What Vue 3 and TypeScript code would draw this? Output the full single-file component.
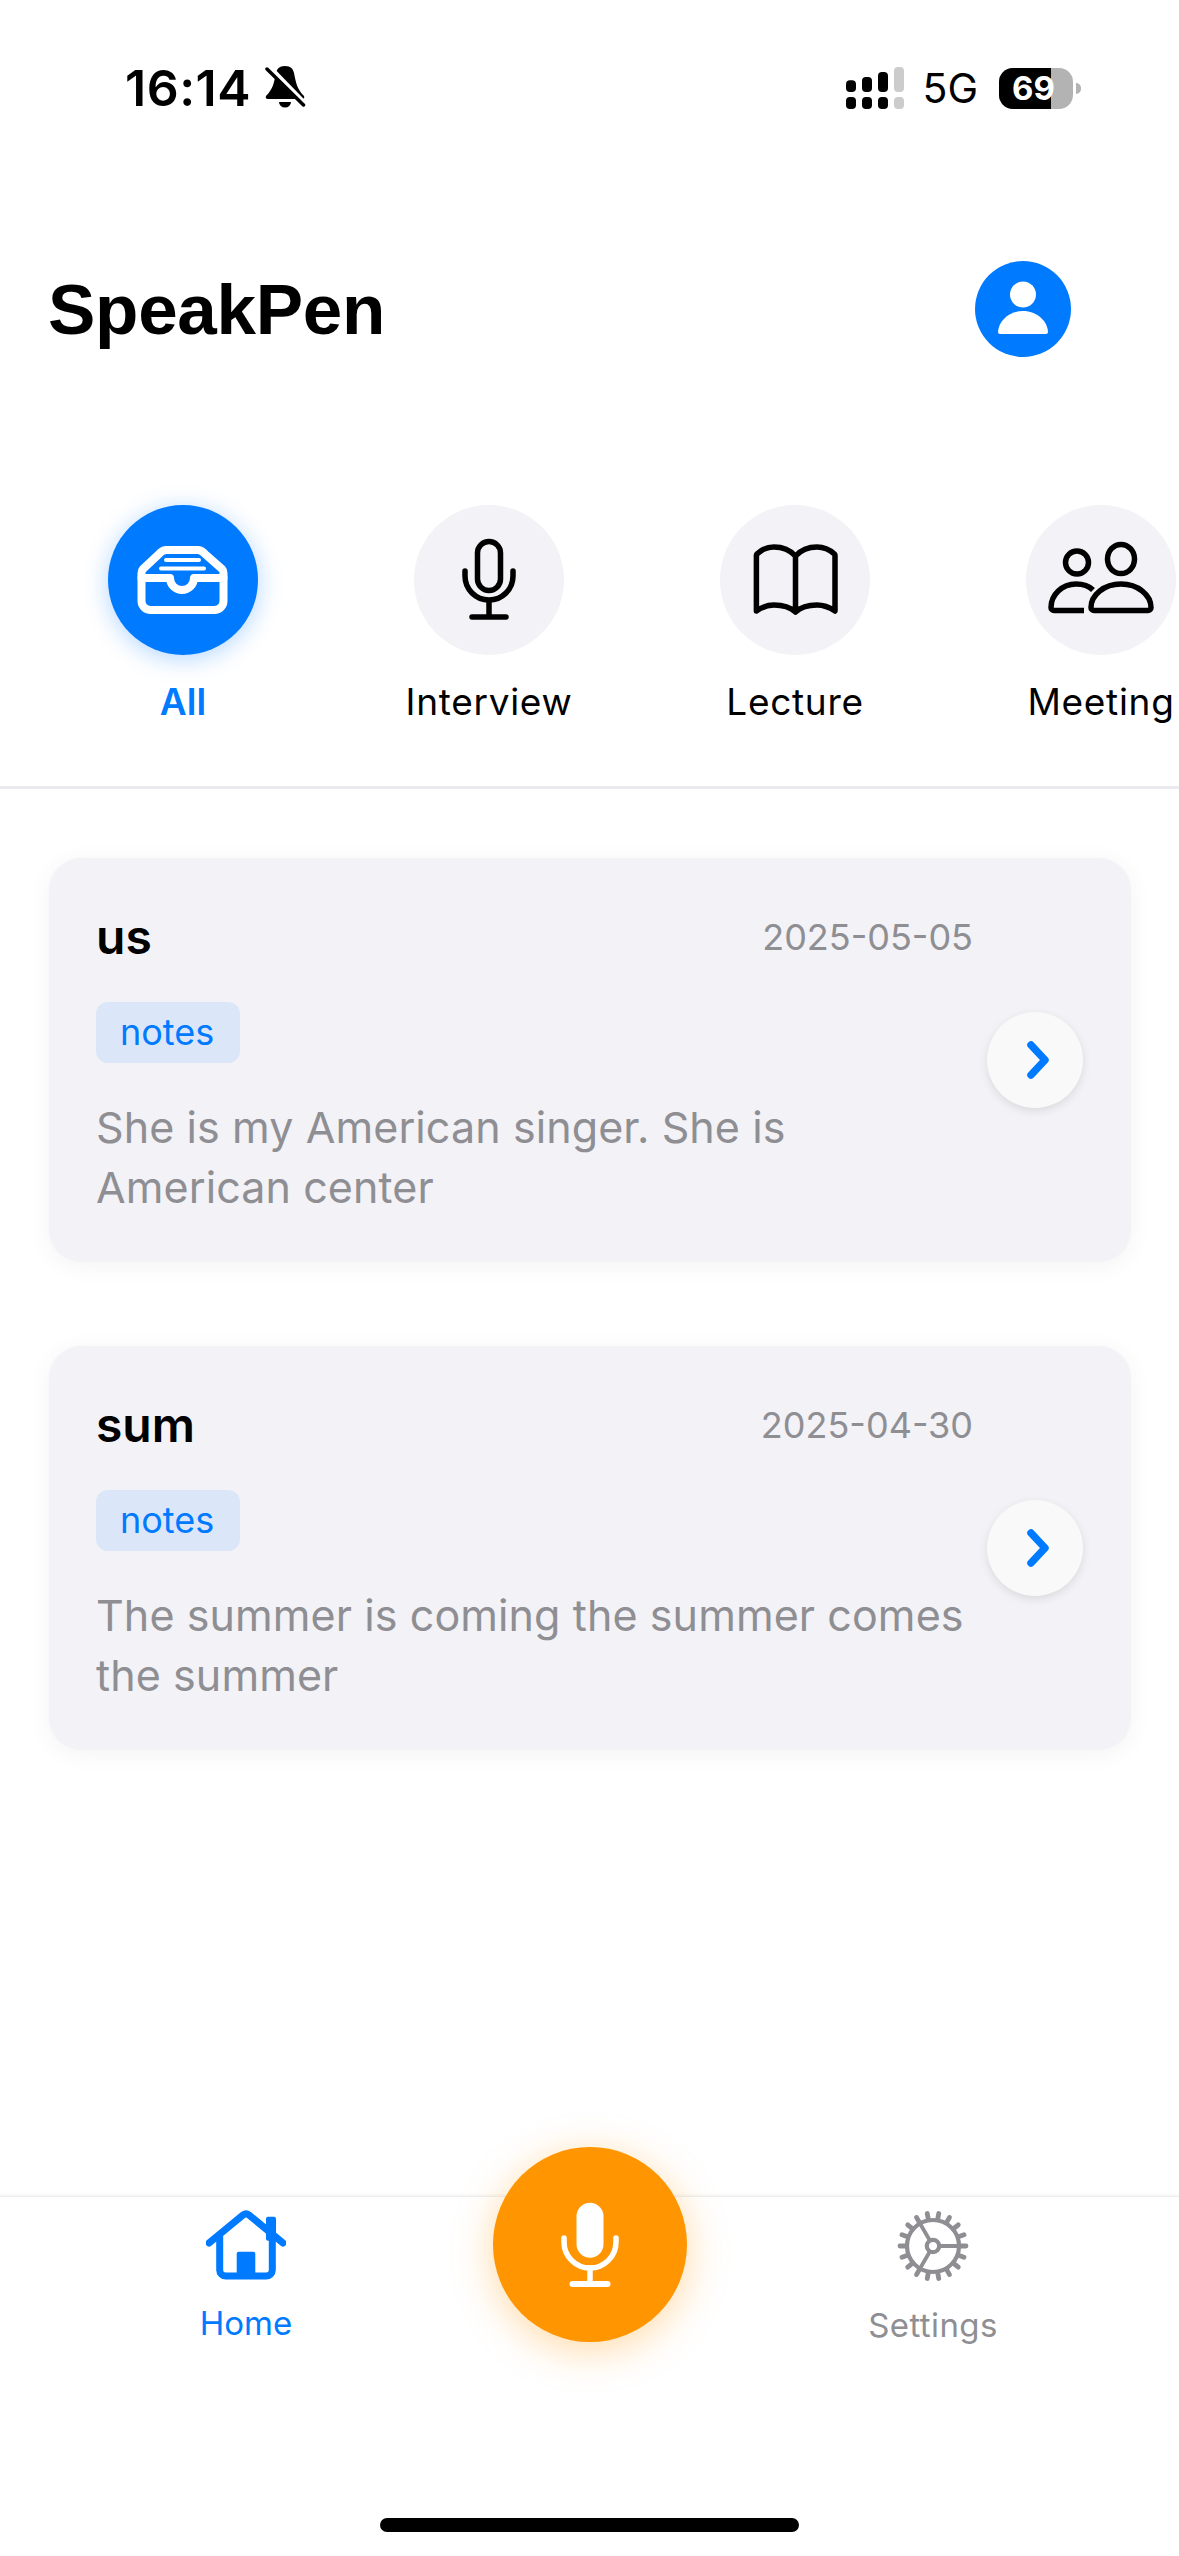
<template>
  <div class="page">
    <div class="status">
      <span class="time">16:14</span>
      <svg class="bell" width="42" height="44" viewBox="0 0 42 44">
        <path d="M20 0C14 0 12 3 11 7C9 17 8 23 1 30Q0 33 3 33H37Q40 33 39 30C32 23 31 17 29 7C28 3 26 0 20 0Z" fill="#000" />
        <path d="M14 36a6 5.500 0 0 0 12 0Z" fill="#000" />
        <path d="M5 1L41 38" stroke="#fff" stroke-width="4" />
        <path d="M2 3L38.500 39" stroke="#000" stroke-width="3.500" stroke-linecap="round" />
      </svg>
      <div class="status-right">
        <svg width="58" height="42" viewBox="0 0 58 42">
          <rect v-for="b in signalBars" :key="b.x" :x="b.x" :y="b.y" width="10" :height="25 - b.y" rx="4" :fill="b.x === 48 ? '#ccc' : '#000'" />
          <rect v-for="b in signalBars" :key="b.x" :x="b.x" y="30" width="10" height="12" rx="4" :fill="b.x === 48 ? '#ccc' : '#000'" />
        </svg>
        <span class="net">5G</span>
        <div class="battery">
          <div class="battery-fill"></div>
          <span class="battery-num">69</span>
        </div>
        <div class="battery-nub"></div>
      </div>
    </div>

    <header class="header">
      <h1 class="title">SpeakPen</h1>
      <div class="avatar">
        <svg width="96" height="96" viewBox="0 0 96 96" fill="#fff">
          <circle cx="48" cy="33.500" r="13" />
          <path d="M25 73a2 2 0 0 1-2-2C23.500 60 34 50 48 50C62 50 72.500 60 73 71a2 2 0 0 1-2 2Z" />
        </svg>
      </div>
    </header>

    <div class="tabs">
      <div v-for="tab in tabs" :key="tab.id" class="tab" :class="{ active: tab.id === 'all' }">
        <div class="tab-circle">
          <svg width="150" height="150" viewBox="0 0 150 150" fill="none" stroke-linecap="round" stroke-linejoin="round">
            <g v-if="tab.id === 'all'" stroke="#fff">
              <path stroke-width="8" d="M33.500 68V96a9 9 0 0 0 9 9H106.500a9 9 0 0 0 9-9V68a6 6 0 0 0-1.500-4L97 49a10 10 0 0 0-7-4H58a10 10 0 0 0-7 4L35 64a6 6 0 0 0-1.500 4Z" />
              <path stroke-width="8" d="M33.500 73H62a12 12 0 0 0 24 0H115.500" />
              <path stroke-width="4" d="M58 55H91M53 63.500H96" />
            </g>
            <g v-else-if="tab.id === 'interview'" stroke="#000" stroke-width="5.500">
              <rect x="63.500" y="36.500" width="23" height="49" rx="11.500" />
              <path d="M51 66V71a24 24 0 0 0 48 0V66M75 95V112M58 112H92" />
            </g>
            <g v-else-if="tab.id === 'lecture'" stroke="#000" stroke-width="5.500">
              <path d="M75.500 51C70 45 62 42 54 42C47 42 41 45 37 49a2 2 0 0 0-.6 1.500V106C42 102 48 100 54 100C62 100 70 102 75.500 107C81 102 89 100 97 100C103 100 109 102 115 106V50.500a2 2 0 0 0-.6-1.500C110 45 104 42 97 42C89 42 81 45 75.500 51ZM75.500 51V107" />
            </g>
            <g v-else stroke="#000" stroke-width="5.500">
              <ellipse cx="95" cy="54" rx="13.500" ry="14.500" />
              <circle cx="51" cy="57.500" r="11.500" />
              <path d="M68 105.500H122a3 3 0 0 0 3-3C125 90 112 79 95 79C78 79 65 90 65 102.500a3 3 0 0 0 3 3Z" />
              <path d="M58 105.500H28a3 3 0 0 1-3-3C25 90 36 79 50 79C57 79 63 81 67 85" stroke-linecap="butt" />
            </g>
          </svg>
        </div>
        <span class="tab-label">{{ tab.label }}</span>
      </div>
    </div>

    <div class="list">
      <div v-for="note in notes" :key="note.title" class="card">
        <div class="card-body">
          <div class="card-top">
            <span class="card-title">{{ note.title }}</span>
            <span class="card-date">{{ note.date }}</span>
          </div>
          <span class="tag">notes</span>
          <p class="card-text">{{ note.text }}</p>
        </div>
        <div class="card-arrow">
          <svg width="30" height="44" viewBox="0 0 30 44" fill="none">
            <path d="M8 7L22 22L8 37" stroke="#007aff" stroke-width="7.500" stroke-linecap="round" stroke-linejoin="round" />
          </svg>
        </div>
      </div>
    </div>

    <nav class="nav">
      <div class="nav-items">
        <div class="nav-item home">
          <svg width="80" height="70" viewBox="0 0 80 70" fill="none" stroke="#007aff" stroke-linecap="round" stroke-linejoin="round">
            <path stroke-width="7" d="M3 33L37 5a5 5 0 0 1 6 0L77 33" />
            <path stroke-width="7" d="M13.700 27V60a6 6 0 0 0 6 6H60.300a6 6 0 0 0 6-6V27" />
            <rect x="60" y="6.700" width="10" height="24" rx="2" fill="#007aff" stroke="none" />
            <rect x="30.700" y="41.700" width="18.600" height="25" rx="2" fill="#007aff" stroke="none" />
          </svg>
          <span>Home</span>
        </div>
        <div class="nav-item">
          <svg width="72" height="72" viewBox="-36 -36 72 72" fill="none" stroke="#8e8e93" stroke-linecap="round">
            <circle r="26" stroke-width="4.200" />
            <path v-for="t in gearTeeth" :key="t" :d="t" stroke-width="4.800" />
            <circle r="6.200" stroke-width="4.200" />
            <path stroke-width="3.800" d="M8 0H26M-4 -7L-13 -22.500M-4 7L-13 22.500" />
          </svg>
          <span>Settings</span>
        </div>
      </div>
      <button class="record">
        <svg width="194" height="195" viewBox="0 0 194 195" fill="none" stroke="#fff" stroke-linecap="round">
          <rect x="83.500" y="55.700" width="27" height="55" rx="13.500" fill="#fff" stroke="none" />
          <path stroke-width="5.500" d="M71 91V95a26 26 0 0 0 52 0V91" />
          <path stroke-width="5.500" d="M97 121V137" />
          <path stroke-width="6" d="M79.500 137H114.500" />
        </svg>
      </button>
      <div class="home-bar"></div>
    </nav>
  </div>
</template>

<script setup lang="ts">
const signalBars = [
  { x: 0, y: 13.3 },
  { x: 16, y: 10 },
  { x: 32, y: 5 },
  { x: 48, y: 0 }
];

const tabs = [
  { id: 'all', label: 'All' },
  { id: 'interview', label: 'Interview' },
  { id: 'lecture', label: 'Lecture' },
  { id: 'meeting', label: 'Meeting' }
];

const notes = [
  { title: 'us', date: '2025-05-05', text: 'She is my American singer. She is American center' },
  { title: 'sum', date: '2025-04-30', text: 'The summer is coming the summer comes the summer' }
];

// 18 short ticks round the ring of the settings gear
const gearTeeth = Array.from({ length: 18 }, (_, i) => {
  const a = (i * 20 * Math.PI) / 180;
  const c = Math.cos(a);
  const s = Math.sin(a);
  return `M${(27 * c).toFixed(2)} ${(27 * s).toFixed(2)}L${(33 * c).toFixed(2)} ${(33 * s).toFixed(2)}`;
});
</script>

<style scoped>
.page {
  height: 2556px;
  display: flex;
  flex-direction: column;
  overflow: hidden;
  background: #fff;
  font-family: Inter, "Liberation Sans", sans-serif;
  color: #000;
}

.status {
  height: 176px;
  flex-shrink: 0;
  display: flex;
  align-items: center;
  padding-left: 125px;
}

.time {
  font-size: 50px;
  font-weight: 600;
  letter-spacing: 0.5px;
  line-height: 1;
}

.bell {
  margin-left: 14px;
}

.status-right {
  margin-left: auto;
  margin-right: 98px;
  display: flex;
  align-items: center;
}

.net {
  margin-left: 18px;
  font-size: 41px;
  font-weight: 400;
  line-height: 1;
}

.battery {
  position: relative;
  margin-left: 21px;
  width: 74px;
  height: 41px;
  border-radius: 14px;
  overflow: hidden;
  background: #b3b3b3;
}

.battery-fill {
  width: 52px;
  height: 100%;
  background: #000;
}

.battery-num {
  position: absolute;
  left: 13px;
  top: 0;
  color: #fff;
  font-size: 33px;
  font-weight: 700;
  line-height: 41px;
}

.battery-nub {
  width: 5px;
  height: 11px;
  margin-left: 3px;
  border-radius: 0 5px 5px 0;
  background: #b3b3b3;
}

.header {
  margin-top: 85px;
  height: 96px;
  flex-shrink: 0;
  display: flex;
  align-items: center;
  justify-content: space-between;
  padding: 0 108px 0 48px;
}

.title {
  margin: 0;
  padding-top: 2px;
  font-family: "Liberation Sans", Arial, sans-serif;
  font-size: 71px;
  font-weight: 700;
  letter-spacing: -0.3px;
  line-height: 94px;
}

.avatar {
  width: 96px;
  height: 96px;
  border-radius: 50%;
  background: #007aff;
}

.avatar svg,
.tab-circle svg,
.record svg {
  display: block;
}

.tabs {
  margin-top: 148px;
  height: 281px;
  flex-shrink: 0;
  display: flex;
  gap: 156px;
  padding-left: 108px;
  border-bottom: 3px solid #eaeaef;
}

.tab {
  width: 150px;
  flex-shrink: 0;
  display: flex;
  flex-direction: column;
  align-items: center;
}

.tab-circle {
  width: 150px;
  height: 150px;
  border-radius: 50%;
  background: #f2f2f7;
}

.tab.active .tab-circle {
  background: #007aff;
  box-shadow: 0 4px 24px rgba(0, 122, 255, 0.3);
}

.tab-label {
  margin-top: 22px;
  font-size: 37px;
  letter-spacing: 0.7px;
  line-height: 50px;
  white-space: nowrap;
}

.tab.active .tab-label {
  color: #007aff;
  font-weight: 600;
  letter-spacing: 0;
}

.list {
  padding: 69px 48px 0 49px;
  display: flex;
  flex-direction: column;
  gap: 84px;
}

.card {
  height: 404px;
  flex-shrink: 0;
  box-sizing: border-box;
  display: flex;
  align-items: center;
  gap: 14px;
  padding: 0 48px 0 47px;
  border-radius: 32px;
  background: #f2f2f7;
  box-shadow: 0 4px 24px rgba(0, 0, 0, 0.05);
}

.card-body {
  flex: 1;
  min-width: 0;
  padding-top: 4px;
  display: flex;
  flex-direction: column;
  align-items: flex-start;
}

.card-top {
  align-self: stretch;
  display: flex;
  align-items: center;
  justify-content: space-between;
}

.card-title {
  font-size: 48px;
  font-weight: 600;
  line-height: 60px;
}

.card-date {
  font-size: 36px;
  color: #8e8e93;
  line-height: 60px;
}

.tag {
  margin-top: 35px;
  padding: 0 26px 0 24px;
  height: 61px;
  border-radius: 12px;
  background: #dbe6f8;
  color: #007aff;
  font-size: 36px;
  line-height: 61px;
}

.card-text {
  margin: 34px 0 0;
  font-size: 43px;
  letter-spacing: 0.1px;
  line-height: 60px;
  color: #8e8e93;
}

.card-arrow {
  width: 96px;
  height: 96px;
  flex-shrink: 0;
  box-sizing: border-box;
  padding-left: 6px;
  display: flex;
  align-items: center;
  justify-content: center;
  border-radius: 50%;
  background: #f9f9f9;
  box-shadow: 0 3px 10px rgba(0, 0, 0, 0.1);
}

.nav {
  position: relative;
  margin-top: auto;
  height: 360px;
  flex-shrink: 0;
  box-sizing: border-box;
  display: flex;
  flex-direction: column;
  border-top: 1px solid #eeeef0;
  box-shadow: 0 -1px 3px rgba(0, 0, 0, 0.06);
}

.nav-items {
  display: flex;
  justify-content: space-between;
  padding: 13px 146px 0 146px;
}

.nav-item {
  width: 200px;
  display: flex;
  flex-direction: column;
  align-items: center;
  color: #8e8e93;
  font-size: 33px;
  letter-spacing: 0.4px;
  line-height: 44px;
}

.nav-item span {
  margin-top: 21px;
}

.nav-item.home {
  color: #007aff;
  letter-spacing: 0;
}

.record {
  position: absolute;
  left: 492.5px;
  top: -50px;
  width: 194px;
  height: 195px;
  padding: 0;
  border: none;
  border-radius: 50%;
  background: #ff9500;
  box-shadow: 0 8px 40px rgba(255, 149, 0, 0.35);
}

.home-bar {
  margin: auto auto 24px;
  width: 419px;
  height: 14px;
  border-radius: 7px;
  background: #000;
}
</style>
